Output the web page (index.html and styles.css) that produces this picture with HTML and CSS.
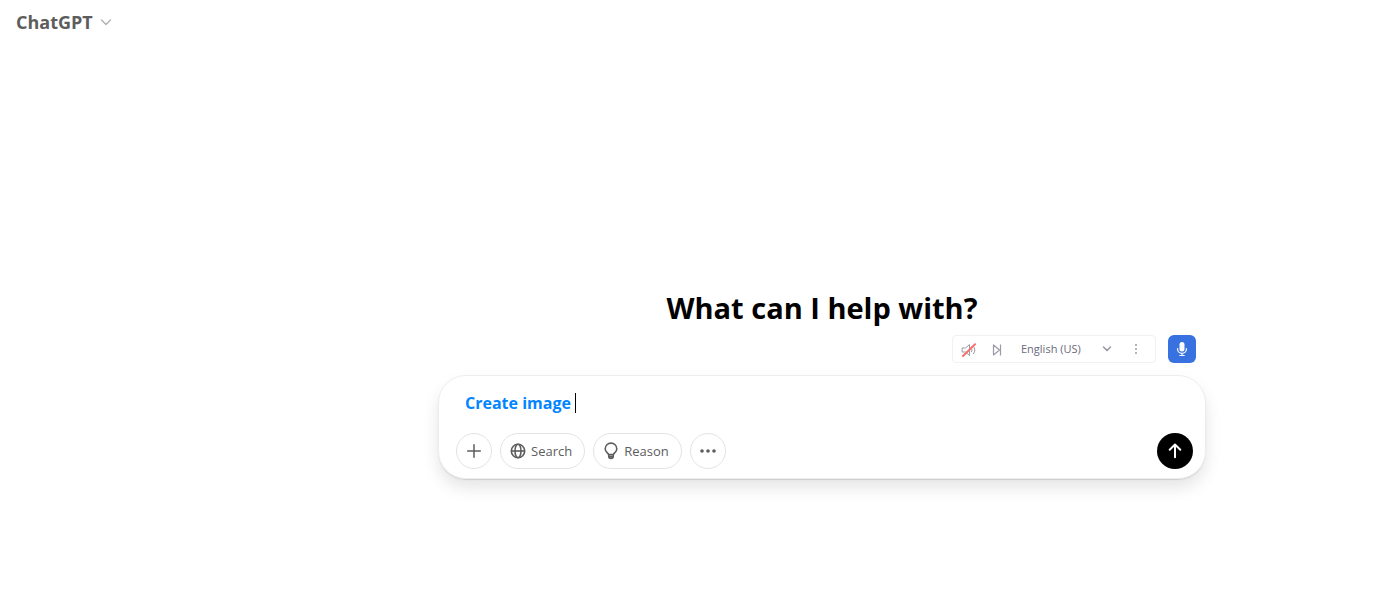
FILE: index.html
```html
<!DOCTYPE html>
<html lang="en">
<head>
<meta charset="utf-8">
<meta name="viewport" content="width=device-width, initial-scale=1">
<title>ChatGPT</title>
<link rel="stylesheet" href="styles.css">
</head>
<body>
<header class="topbar">
  <button class="model-button" type="button">
    ChatGPT
    <svg width="12" height="8" viewBox="0 0 12 8" fill="none" stroke="#b4b4b4" stroke-width="1.5" stroke-linecap="round" stroke-linejoin="round" aria-hidden="true"><path d="M1.500 2l4.500 4.500L10.500 2"/></svg>
  </button>
</header>
<main class="main">
  <h1 class="title">What can I help with?</h1>
  <div class="voice">
    <div class="voice-bar">
      <button class="voice-button" type="button" aria-label="Sound off">
        <svg width="16" height="16" viewBox="0 0 16 16" fill="none" stroke="#9b9ba8" stroke-width="1" stroke-linejoin="round" stroke-linecap="round" aria-hidden="true"><path d="M1.500 7h3l4-3.500v11l-4-3.500h-3z"/><path d="M10.500 7.200q1.200 1.800 0 3.600M12.300 5.200q3.400 3.800 0 7.600"/><path d="M2 15L14 3.200" stroke="#f87171" stroke-width="2"/></svg>
      </button>
      <button class="voice-button" type="button" aria-label="Skip">
        <svg width="16" height="16" viewBox="0 0 16 16" fill="none" stroke="#9b9ba8" stroke-width="1.2" stroke-linejoin="round" aria-hidden="true"><path d="M4.500 4v10l6-5zM11.500 3.500v11"/></svg>
      </button>
      <select class="language" aria-label="Language"><option>English (US)</option></select>
      <svg class="language-arrow" width="10" height="6" viewBox="0 0 10 6" fill="none" stroke="#92929b" stroke-width="1.4" stroke-linecap="round" stroke-linejoin="round" aria-hidden="true"><path d="M1.500 1L5 4.500 8.500 1"/></svg>
      <button class="voice-button" type="button" aria-label="More voice options">
        <svg width="16" height="16" viewBox="0 0 16 16" fill="#b4b4be" aria-hidden="true"><path d="M7 3h2v2H7zM7 7h2v2H7zM7 11h2v2H7z"/></svg>
      </button>
    </div>
    <button class="mic" type="button" aria-label="Dictate">
      <svg width="16" height="16" viewBox="0 0 16 16" fill="none" stroke="#fff" stroke-width="1.2" stroke-linecap="round" aria-hidden="true"><rect x="5.500" y="1" width="5" height="9.500" rx="2.500" fill="#fff" stroke="none"/><path d="M3.600 7.500v.5a4.400 4.400 0 0 0 8.800 0v-.5M8 12.400v2M5.800 14.500h4.400"/></svg>
    </button>
  </div>
  <form class="composer">
    <div class="prompt-line">
      <input class="prompt" type="text" value="Create image" aria-label="Message">
      <span class="caret"></span>
    </div>
    <div class="actions">
      <button class="pill round" type="button" aria-label="Add">
        <svg width="18" height="18" viewBox="0 0 18 18" fill="none" stroke="#5d5d5d" stroke-width="1.5" stroke-linecap="round" aria-hidden="true"><path d="M9 2.700v12.600M2.700 9h12.600"/></svg>
      </button>
      <button class="pill" type="button">
        <svg width="18" height="18" viewBox="0 0 18 18" fill="none" stroke="#5d5d5d" stroke-width="1.600" aria-hidden="true"><circle cx="9" cy="9" r="6.700"/><ellipse cx="9" cy="9" rx="3" ry="6.700"/><path d="M2.300 9h13.400"/></svg>
        Search
      </button>
      <button class="pill" type="button">
        <svg width="18" height="18" viewBox="0 0 18 18" fill="none" stroke="#5d5d5d" stroke-width="1.600" stroke-linejoin="round" aria-hidden="true"><path d="M6.700 12.600C6.400 11.400 3.200 10 3.200 6.900a5.800 5.800 0 0 1 11.600 0c0 3.100-3.200 4.500-3.500 5.700z"/><path d="M6.700 12.500v1.500c0 3.200 4.600 3.200 4.600 0v-1.500M6.800 14.500h4.400"/></svg>
        Reason
      </button>
      <button class="pill round" type="button" aria-label="More">
        <svg width="18" height="18" viewBox="0 0 18 18" fill="#5d5d5d" aria-hidden="true"><circle cx="3" cy="9" r="1.800"/><circle cx="9" cy="9" r="1.800"/><circle cx="15" cy="9" r="1.800"/></svg>
      </button>
      <button class="send" type="submit" aria-label="Send">
        <svg width="18" height="18" viewBox="0 0 18 18" fill="none" stroke="#fff" stroke-width="2" stroke-linecap="round" stroke-linejoin="round" aria-hidden="true"><path d="M9 15.300V2.800M3.700 7.800L9 2.500l5.300 5.300"/></svg>
      </button>
    </div>
  </form>
</main>
</body>
</html>
```
FILE: styles.css
```css
* { box-sizing: border-box; }

body {
  min-height: 100vh;
  margin: 0;
  background: #fff;
  color: #000;
  font-family: "Segoe UI", "Open Sans", "Noto Sans", sans-serif;
}

button, input, select {
  font: inherit;
  border: 0;
  padding: 0;
  margin: 0;
  background: none;
}

button {
  display: inline-flex;
  align-items: center;
  justify-content: center;
  cursor: pointer;
}

svg { flex: none; }

.topbar {
  display: flex;
  align-items: center;
  height: 44px;
  padding: 0 16px;
}

.model-button {
  gap: 7px;
  color: #5d5d5d;
  font-size: 18px;
  font-weight: 700;
  line-height: 28px;
}

.main {
  display: flex;
  flex-direction: column;
  align-items: center;
  padding: 244px 16px 32px 270px;
}

.title {
  margin: 0;
  font-size: 29px;
  font-weight: 700;
  line-height: 40px;
}

.voice {
  display: flex;
  justify-content: flex-end;
  gap: 12px;
  width: 100%;
  max-width: 768px;
  padding: 7px 10px 12px 0;
}

.voice-bar {
  display: flex;
  align-items: center;
  height: 28px;
  padding: 0 11px 0 8px;
  gap: 12px;
  border: 1px solid #f1f1f3;
  border-radius: 4px;
}

.voice-button { width: 16px; height: 16px; }

.language {
  appearance: none;
  width: 67px;
  margin-left: 4px;
  color: #6b6b7b;
  font-size: 11px;
  line-height: 16px;
}

.language-arrow { margin: 0 4px 0 2px; }

.mic {
  width: 28px;
  height: 28px;
  border-radius: 6px;
  background: #3871e0;
}

.composer {
  width: 100%;
  max-width: 768px;
  padding: 15px 12px 9px 17px;
  border: 1px solid #ededed;
  border-radius: 28px;
  box-shadow: 0 9px 16px rgba(0, 0, 0, 0.1), 0 1px 1px rgba(0, 0, 0, 0.12);
}

.prompt-line {
  display: flex;
  align-items: center;
  gap: 4px;
  height: 24px;
  padding-left: 9px;
}

.prompt {
  field-sizing: content;
  color: #0285ff;
  font-size: 16px;
  font-weight: 700;
  line-height: 24px;
  outline: 0;
}

.caret {
  width: 1px;
  height: 20px;
  background: #000;
}

.actions {
  display: flex;
  gap: 8px;
  margin-top: 18px;
}

.pill {
  gap: 4px;
  height: 36px;
  padding: 0 12px 0 8px;
  border: 1px solid #e3e3e3;
  border-radius: 18px;
  color: #5d5d5d;
  font-size: 13px;
  line-height: 20px;
}

.round { width: 36px; padding: 0; }

.send {
  width: 36px;
  height: 36px;
  margin-left: auto;
  border-radius: 50%;
  background: #000;
}
```
